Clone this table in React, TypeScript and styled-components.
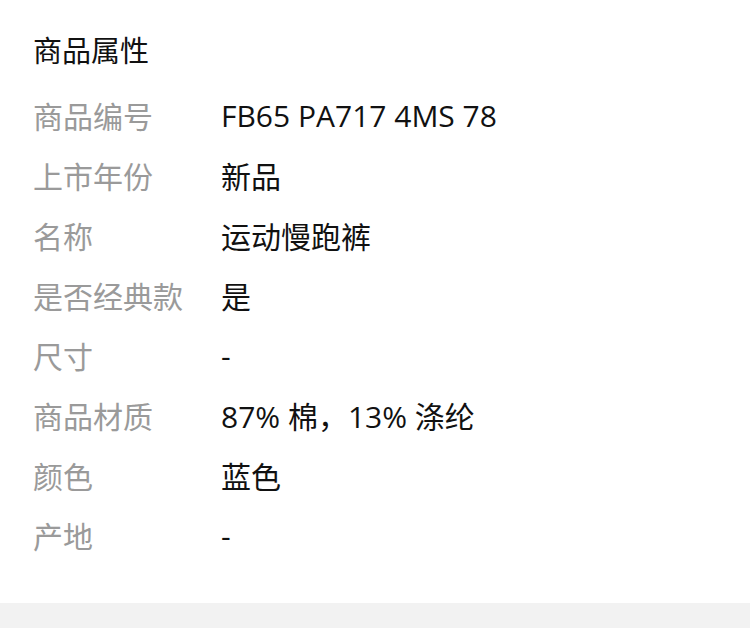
import React from "react";
import styled, { createGlobalStyle } from "styled-components";

const Global = createGlobalStyle`
  html, body { margin: 0; padding: 0; background: #ffffff; }
  body { font-family: "Open Sans", "Noto Sans CJK SC", sans-serif; }
`;

const Page = styled.div`
  display: flex;
  flex-direction: column;
  width: 750px;
  height: 628px;
  background: #ffffff;
`;

const Section = styled.section`
  display: flex;
  flex-direction: column;
  padding: 24px 0 0 33px;
  height: 603px;
  box-sizing: border-box;
`;

const Title = styled.h2`
  margin: 0 0 11px 0;
  font-weight: 400;
  font-size: 29px;
  line-height: 50px;
  color: #111111;
  font-family: "Noto Sans CJK SC", sans-serif;
`;

const List = styled.dl`
  margin: 0;
  display: flex;
  flex-direction: column;
`;

const Row = styled.div`
  display: flex;
  align-items: center;
  height: 60px;
`;

const Label = styled.dt`
  width: 188px;
  flex-shrink: 0;
  margin: 0;
  font-size: 30px;
  color: #9a9a9a;
  font-family: "Noto Sans CJK SC", sans-serif;
`;

const Value = styled.dd`
  margin: 0;
  font-size: 30px;
  color: #111111;
  font-family: "Open Sans", "Noto Sans CJK SC", sans-serif;
`;

const Footer = styled.div`
  flex: 1;
  background: #f2f2f2;
`;

const rows: [string, string][] = [
  ["商品编号", "FB65 PA717 4MS 78"],
  ["上市年份", "新品"],
  ["名称", "运动慢跑裤"],
  ["是否经典款", "是"],
  ["尺寸", "-"],
  ["商品材质", "87% 棉，13% 涤纶"],
  ["颜色", "蓝色"],
  ["产地", "-"],
];

export default function App() {
  return (
    <Page>
      <Global />
      <Section>
        <Title>商品属性</Title>
        <List>
          {rows.map(([k, v]) => (
            <Row key={k}>
              <Label>{k}</Label>
              <Value>{v}</Value>
            </Row>
          ))}
        </List>
      </Section>
      <Footer />
    </Page>
  );
}
